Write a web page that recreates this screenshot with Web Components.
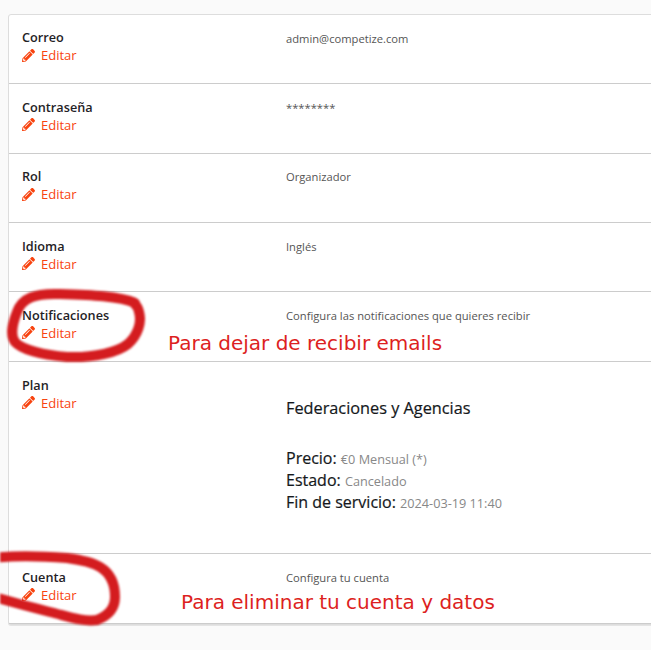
<!DOCTYPE html>
<html lang="es"><head><meta charset="utf-8"><title>Cuenta</title>
<style>
html,body{margin:0;padding:0;background:#fafafa;height:650px;overflow:hidden}
body{font-family:"Open Sans",sans-serif;position:relative}
</style></head><body>
<template id="t-card"><style>
:host{display:block;margin:14px -40px 0 8px;background:#fff;border:1px solid #ddd;border-radius:3px;box-shadow:0 1px 0 #e4e4e4;box-sizing:border-box;height:611px}
</style><slot></slot></template>
<template id="t-row"><style>
:host{display:grid;grid-template-columns:264px 1fr;box-sizing:border-box;padding:13.3px 13px 0;border-bottom:1px solid #ccc;height:var(--h,69.45px)}
.t{font-size:12.7px;font-weight:600;color:#1f2226;line-height:18px}
.e{display:flex;align-items:center;gap:6px;font-size:13px;color:#f8430f;line-height:18px}
svg{width:13px;height:13px;display:block;fill:#f8430f}
.v{font-size:11.2px;color:#555;line-height:18px;padding-top:1.25px}
</style><div><div class="t"><slot name="title"></slot></div><div class="e"><svg viewBox="0 0 512 512"><path d="M497.9 142.1l-46.100 46.100c-4.700 4.700-12.300 4.700-17 0l-111-111c-4.700-4.700-4.700-12.300 0-17l46.100-46.100c18.700-18.700 49.100-18.700 67.900 0l60.100 60.100c18.800 18.700 18.800 49.100 0 67.900zM284.200 99.800L21.600 362.400.4 483.900c-2.900 16.400 11.400 30.600 27.800 27.800l121.500-21.300 262.600-262.600c4.700-4.700 4.700-12.300 0-17l-111-111c-4.800-4.700-12.400-4.700-17.100 0zM124.100 339.900c-5.500-5.500-5.500-14.300 0-19.800l154-154c5.500-5.500 14.300-5.500 19.800 0s5.500 14.300 0 19.800l-154 154c-5.500 5.500-14.300 5.500-19.800 0zM88 424h48v36.300l-64.500 11.300-31.100-31.100L51.700 376H88v48z"/></svg><span>Editar</span></div></div><div class="v"><slot></slot></div></template>
<template id="t-plan"><style>
:host{display:block;padding-top:19px;color:#15181b}
h2{margin:0 0 27px;font-size:16.3px;line-height:24px;color:#15181b;font-weight:500;-webkit-text-stroke:.2px #15181b}
div{font-size:16px;line-height:22px;font-weight:500;-webkit-text-stroke:.2px #15181b}
span{font-size:12.7px;line-height:1;color:#888;font-weight:400;-webkit-text-stroke:0}
</style><h2>Federaciones y Agencias</h2><div>Precio: <span>€0 Mensual (*)</span></div><div>Estado: <span>Cancelado</span></div><div>Fin de servicio: <span>2024-03-19 11:40</span></div></template>
<template id="t-note"><style>
:host{position:absolute;left:var(--x);top:var(--y);font:20px/24px "DejaVu Sans",sans-serif;color:#dd1f22;white-space:nowrap}
</style><slot></slot></template>
<template id="t-scribble"><style>
:host{position:absolute;inset:0;display:block;pointer-events:none}
svg{display:block;width:651px;height:650px;filter:blur(.8px)}
path{fill:none;stroke:#d41c1f;stroke-width:10;stroke-linecap:round;stroke-linejoin:round}
</style><svg viewBox="0 0 651 650"><path d="M135 303C120 296 90 295 60 294C35 293 22 298 17 312C12 325 10 335 15 342C22 350 45 355 67 357C95 358 118 352 128 344C138 335 142 322 139 312C138 306 135 304 133 302"/><path d="M-6 558C10 556 40 556 67 558C82 560 92 562 100 567C110 573 115 583 115 597C115 607 110 615 97 620C82 622 67 616 50 612C30 607 12 602 -6 597"/></svg></template>

<account-card>
<account-row><span slot="title">Correo</span>admin@competize.com</account-row>
<account-row><span slot="title">Contraseña</span>********</account-row>
<account-row><span slot="title">Rol</span>Organizador</account-row>
<account-row style="--h:69.1px"><span slot="title">Idioma</span>Inglés</account-row>
<account-row style="--h:70px"><span slot="title">Notificaciones</span>Configura las notificaciones que quieres recibir</account-row>
<account-row style="--h:192px"><span slot="title">Plan</span><plan-info></plan-info></account-row>
<account-row style="--h:69.55px"><span slot="title">Cuenta</span>Configura tu cuenta</account-row>
</account-card>
<red-scribble></red-scribble>
<red-note style="--x:168px;--y:331px">Para dejar de recibir emails</red-note>
<red-note style="--x:181px;--y:590px">Para eliminar tu cuenta y datos</red-note>
<script>
for (const [name,id] of [['account-card','t-card'],['account-row','t-row'],['plan-info','t-plan'],['red-note','t-note'],['red-scribble','t-scribble']]) {
  customElements.define(name, class extends HTMLElement {
    constructor(){super();this.attachShadow({mode:'open'}).appendChild(document.getElementById(id).content.cloneNode(true));}
  });
}
</script>
</body></html>
